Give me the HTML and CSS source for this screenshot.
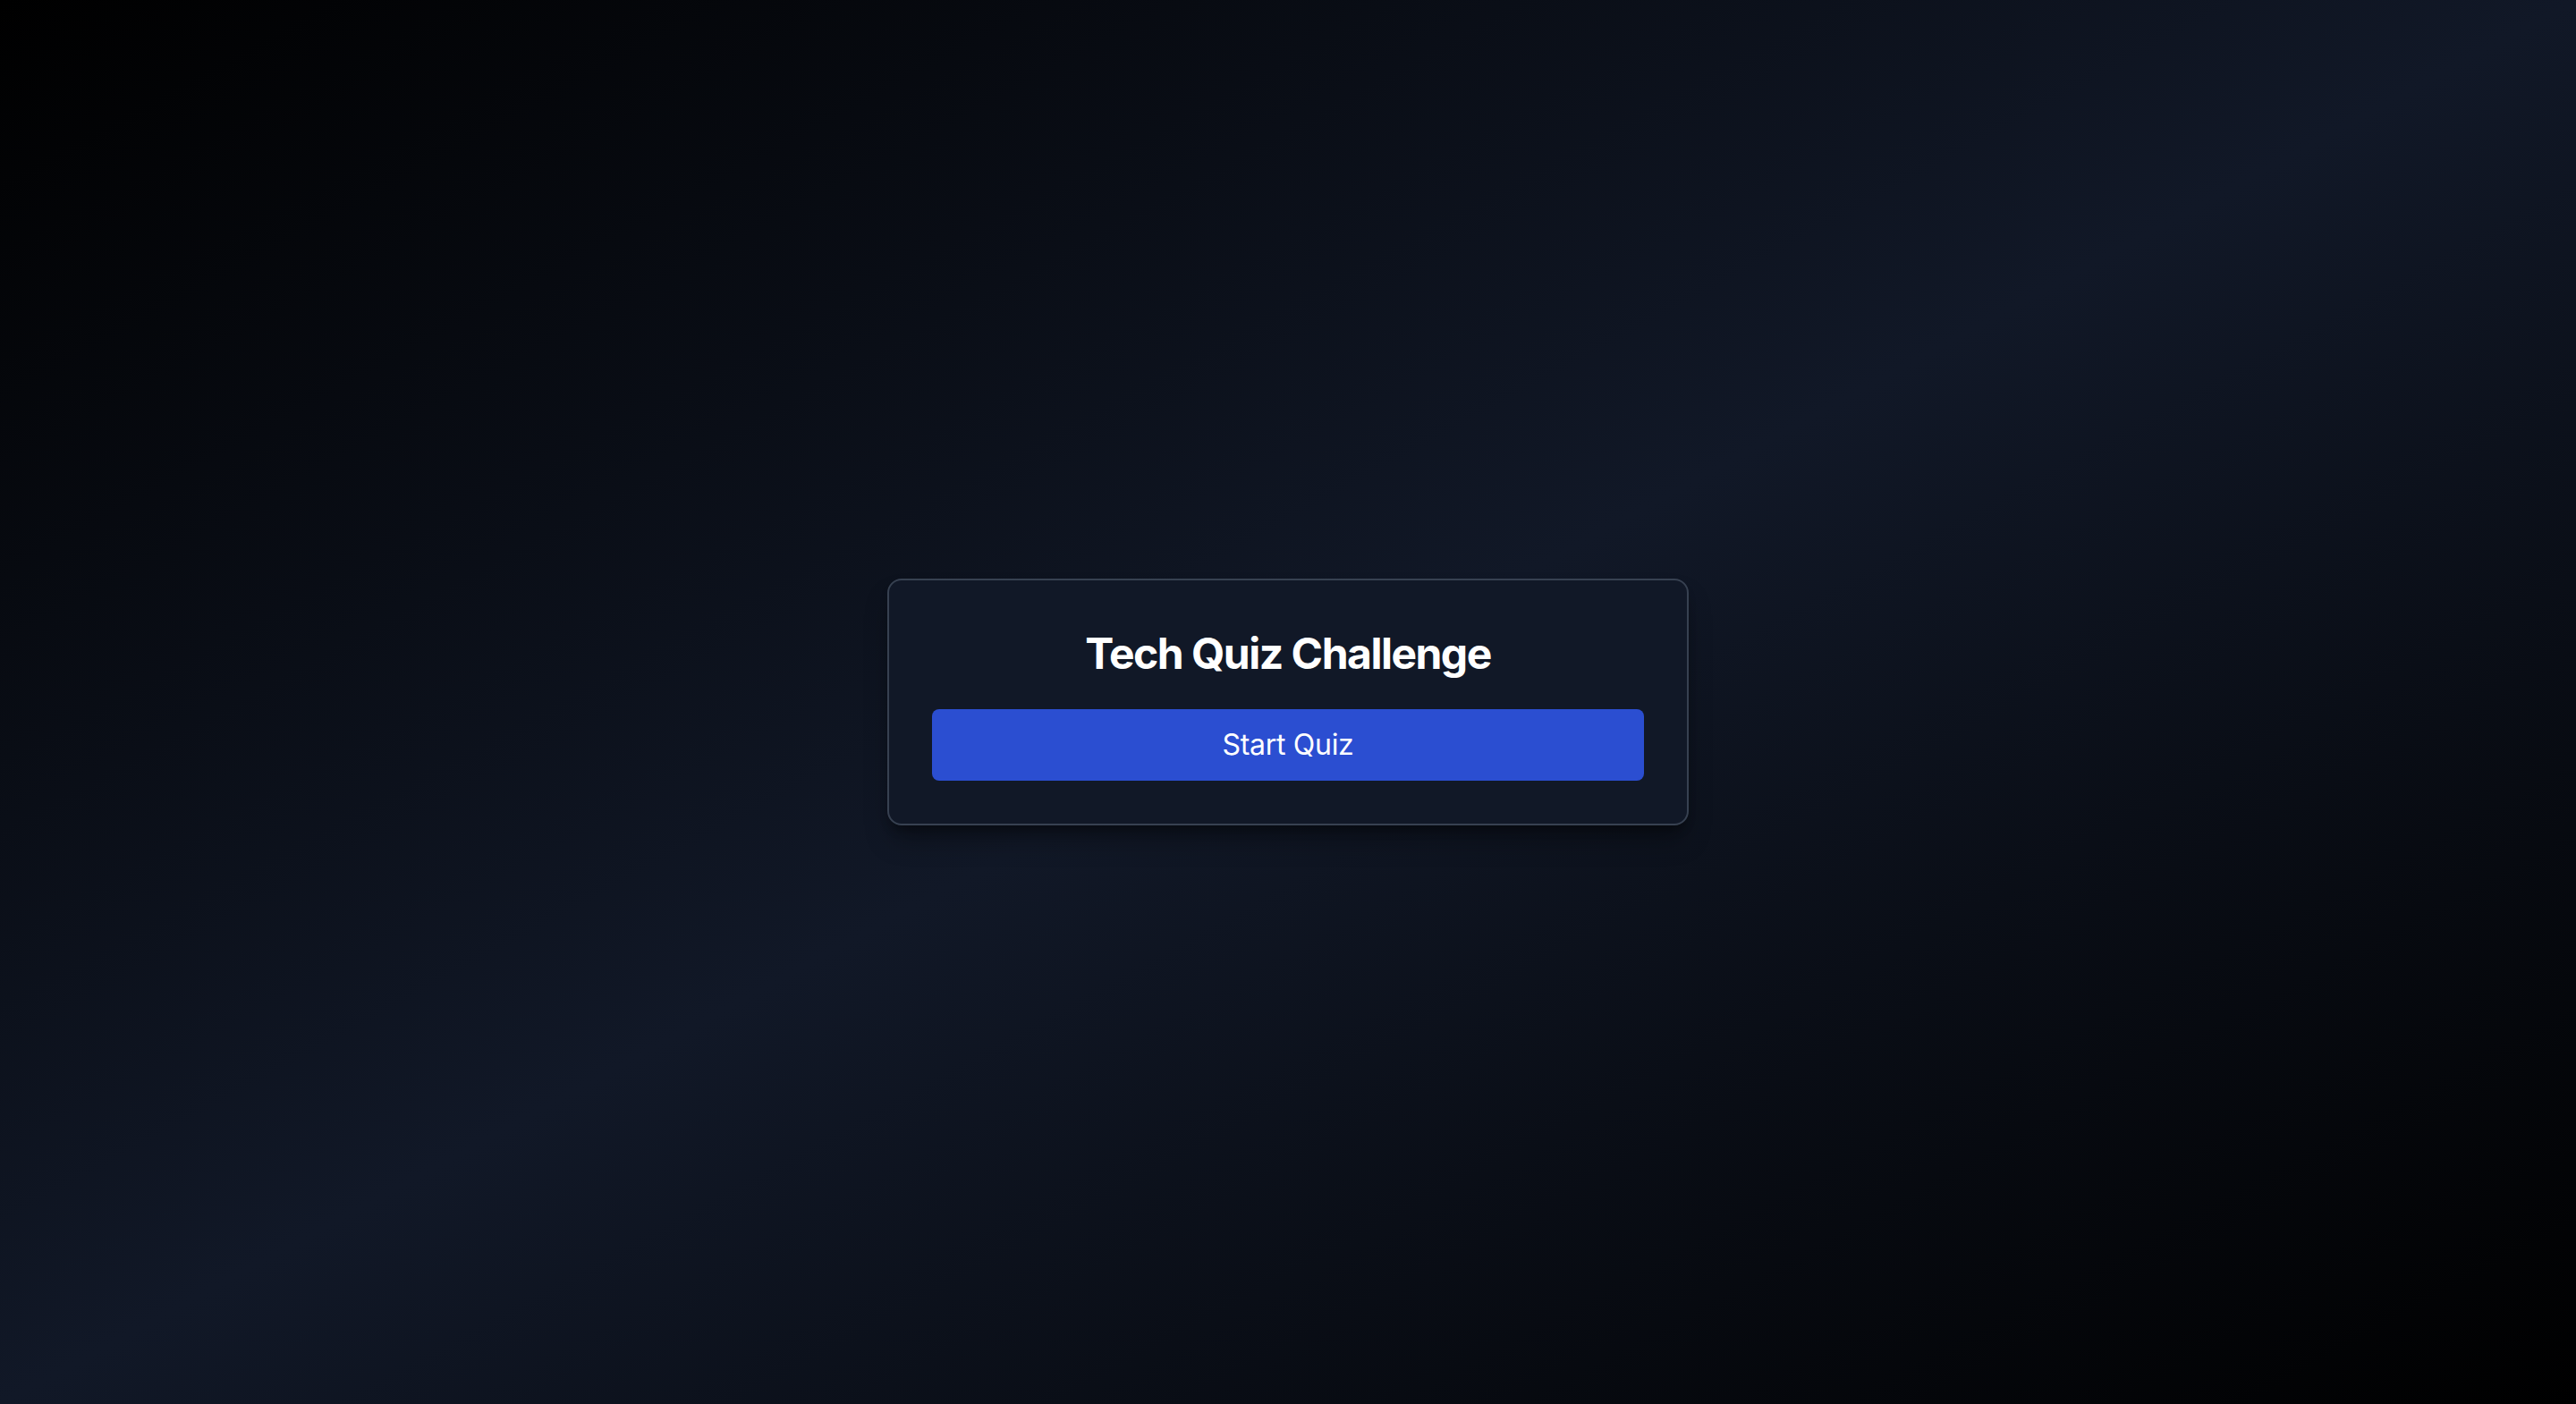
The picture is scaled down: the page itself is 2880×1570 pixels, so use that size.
FILE: index.html
```html
<!DOCTYPE html>
<html lang="en">
<head>
<meta charset="utf-8">
<title>Tech Quiz Challenge</title>
<link rel="stylesheet" href="styles.css">
</head>
<body>
<main class="screen">
  <section class="card">
    <h1 class="title">Tech Quiz Challenge</h1>
    <button class="start-btn" type="button">Start Quiz</button>
  </section>
</main>
</body>
</html>
```

FILE: styles.css
```css
html, body {
  margin: 0;
  padding: 0;
  height: 100%;
}
body {
  font-family: Inter, "Noto Sans", "Liberation Sans", sans-serif;
  color: #ffffff;
}
.screen {
  min-height: 100vh;
  display: flex;
  align-items: center;
  justify-content: center;
  background: linear-gradient(to bottom right, #000000, #111827, #000000);
}
.card {
  width: 796px;
  padding: 48px;
  background: #111827;
  border: 2px solid #374151;
  border-radius: 16px;
  box-shadow: 0 20px 30px -6px rgba(0,0,0,0.35), 0 8px 12px -4px rgba(0,0,0,0.3);
  display: flex;
  flex-direction: column;
  gap: 32px;
}
.title {
  margin: 2px 0 -2px;
  font-size: 48px;
  line-height: 64px;
  font-weight: 700;
  text-align: center;
  letter-spacing: -1.5px;
}
.start-btn {
  font-family: inherit;
  font-size: 32px;
  line-height: 48px;
  padding: 16px;
  border: none;
  border-radius: 8px;
  background: #2b4ed1;
  color: #ffffff;
  letter-spacing: -0.3px;
  cursor: pointer;
}
```
